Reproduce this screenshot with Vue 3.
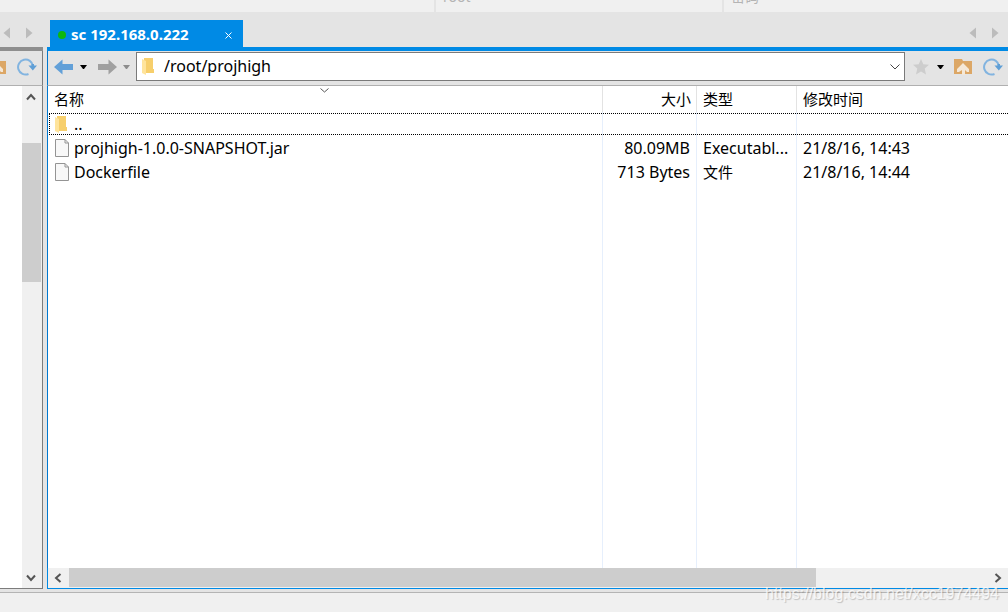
<script setup>
import { ref } from 'vue'

const path = ref('/root/projhigh')
const files = [
  { name: '..', icon: 'folder', size: '', type: '', date: '', focused: true },
  { name: 'projhigh-1.0.0-SNAPSHOT.jar', icon: 'file', size: '80.09MB', type: 'Executabl...', date: '21/8/16, 14:43' },
  { name: 'Dockerfile', icon: 'file', size: '713 Bytes', type: '文件', date: '21/8/16, 14:44', han: true },
]
</script>

<template>
  <div class="app">
    <header class="login">
      <div class="cell cell-host"></div>
      <div class="cell cell-user"><input type="text" placeholder="root" aria-label="用户名" /></div>
      <div class="cell cell-pass"><input type="text" placeholder="密码" aria-label="密码" /></div>
    </header>

    <main class="panes">
      <section class="pane local">
        <div class="tabs">
          <div class="arrows">
            <button aria-label="向左"><svg width="8" height="12"><path d="M7 0.5V11.5L0.5 6Z" fill="#bcbcbc" /></svg></button>
            <button aria-label="向右"><svg width="8" height="12"><path d="M1 0.5V11.5L7.5 6Z" fill="#bcbcbc" /></svg></button>
          </div>
        </div>
        <div class="bar"></div>
        <div class="tools">
          <button aria-label="上级目录">
            <svg width="18" height="16"><path d="M0 0H8L9 2H18V15H0Z" fill="#dca766" /><path d="M9 4L15 10V13H13L11 11V16H8V11L5 13H3V10Z" fill="#f4e8d8" /></svg>
          </button>
          <button aria-label="刷新">
            <svg width="20" height="18"><path d="M11.5 16A7.5 7.5 0 1 1 16 8" fill="none" stroke="#82b4e0" stroke-width="2" /><path d="M11.5 7.5H14.5V6H17V7.5H20L15.8 12.5Z" fill="#609fd6" /></svg>
          </button>
        </div>
        <div class="local-body">
          <div class="vscroll">
            <button aria-label="向上滚动"><svg width="10" height="8"><path d="M1 6.5L5 2L9 6.5" /></svg></button>
            <div class="vtrack"><div class="vthumb"></div></div>
            <button aria-label="向下滚动"><svg width="10" height="8"><path d="M1 1.5L5 6L9 1.5" /></svg></button>
          </div>
        </div>
      </section>

      <section class="pane remote">
        <div class="tabs">
          <div class="tab">
            <i class="dot"></i>
            <button class="tab-title">sc 192.168.0.222</button>
            <button class="close" aria-label="关闭"><svg width="7" height="7"><path d="M0.5 0.5L6.5 6.5M6.5 0.5L0.5 6.5" stroke="#fff" fill="none" /></svg></button>
          </div>
          <div class="arrows">
            <button aria-label="向左"><svg width="8" height="12"><path d="M7 0.5V11.5L0.5 6Z" fill="#bcbcbc" /></svg></button>
            <button aria-label="向右"><svg width="8" height="12"><path d="M1 0.5V11.5L7.5 6Z" fill="#bcbcbc" /></svg></button>
          </div>
        </div>
        <div class="bar"></div>
        <div class="tools">
          <button aria-label="后退"><svg width="20" height="16"><path d="M0 8L8.5 0.5V5H19V11H8.5V15.5Z" fill="#62a0d8" /></svg></button>
          <button class="drop" aria-label="后退历史"><svg width="7" height="4"><path d="M0 0H7L4 4H3Z" fill="#000" /></svg></button>
          <button aria-label="前进"><svg width="20" height="16"><path d="M20 8L11.5 0.5V5H1V11H11.5V15.5Z" fill="#a0a0a0" /></svg></button>
          <button class="drop drop-last" aria-label="前进历史"><svg width="7" height="4"><path d="M0 0H7L4 4H3Z" fill="#8c8c8c" /></svg></button>
          <div class="address">
            <svg width="12" height="17"><path d="M2 0H11V11H12V15H2Z" fill="#f7cf6c" /><path d="M0 1L4 3V17L0 15Z" fill="#ffe49c" /></svg>
            <input v-model="path" type="text" aria-label="路径" />
            <button aria-label="路径列表"><svg width="10" height="6"><path d="M0.5 0.5L5 5L9.5 0.5" fill="none" stroke="#444" /></svg></button>
          </div>
          <button class="star" aria-label="收藏"><svg width="16" height="16"><path d="M8 0L10.3 5.3L16 5.8L11.7 9.6L13 15.5L8 12.4L3 15.5L4.3 9.6L0 5.8L5.7 5.3Z" fill="#cdcdcd" /></svg></button>
          <button class="drop" aria-label="收藏列表"><svg width="7" height="4"><path d="M0 0H7L4 4H3Z" fill="#000" /></svg></button>
          <button aria-label="上级目录">
            <svg width="18" height="16"><path d="M0 0H8L9 2H18V15H0Z" fill="#dca766" /><path d="M9 4L15 10V13H13L11 11V16H8V11L5 13H3V10Z" fill="#f4e8d8" /></svg>
          </button>
          <button class="reload" aria-label="刷新">
            <svg width="20" height="18"><path d="M11.5 16A7.5 7.5 0 1 1 16 8" fill="none" stroke="#82b4e0" stroke-width="2" /><path d="M11.5 7.5H14.5V6H17V7.5H20L15.8 12.5Z" fill="#609fd6" /></svg>
          </button>
        </div>

        <div class="listing">
          <table>
            <colgroup><col /><col class="c-size" /><col class="c-type" /><col class="c-date" /></colgroup>
            <thead>
              <tr>
                <th>名称<svg class="sort" width="9" height="5"><path d="M0.5 0.5L4.5 4L8.5 0.5" fill="none" stroke="#555" /></svg></th>
                <th class="size">大小</th>
                <th>类型</th>
                <th>修改时间</th>
              </tr>
            </thead>
            <tbody>
              <tr v-for="f in files" :key="f.name" :class="{ focused: f.focused }">
                <td>
                  <div class="name">
                    <svg v-if="f.icon === 'folder'" width="14" height="17"><path d="M2 0H11V11H12V15H2Z" fill="#f7cf6c" /><path d="M0 1L4 3V17L0 15Z" fill="#ffe49c" /></svg>
                    <svg v-else width="14" height="18"><path d="M0.5 0.5H10L13.5 4V17.5H0.5Z" fill="#f8f8f8" stroke="#949494" /><path d="M10 0.5V4H13.5" fill="none" stroke="#949494" /></svg>
                    <span>{{ f.name }}</span>
                  </div>
                </td>
                <td class="size">{{ f.size }}</td>
                <td :class="{ han: f.han }">{{ f.type }}</td>
                <td>{{ f.date }}</td>
              </tr>
              <tr class="rest" aria-hidden="true"><td></td><td></td><td></td><td></td></tr>
            </tbody>
          </table>
        </div>
        <div class="hscroll">
          <button aria-label="向左滚动"><svg width="8" height="10"><path d="M6.5 1L2 5L6.5 9" /></svg></button>
          <div class="htrack"><div class="hthumb"></div></div>
          <button aria-label="向右滚动"><svg width="8" height="10"><path d="M1.5 1L6 5L1.5 9" /></svg></button>
        </div>
      </section>
    </main>

    <footer class="status"></footer>
    <div class="mark">https://blog.csdn.net/xcc1974494</div>
  </div>
</template>

<style>
body {
  margin: 0;
}
</style>

<style scoped>
.app {
  position: relative;
  display: flex;
  flex-direction: column;
  height: 100vh;
  overflow: hidden;
  background: #e4e4e4;
  color: #000;
  font: 15px/24px "Noto Sans", "Noto Sans CJK SC", sans-serif;
}
button {
  display: flex;
  flex: none;
  align-items: center;
  justify-content: center;
  margin: 0;
  padding: 0;
  border: 0;
  background: none;
  color: inherit;
  font: inherit;
}
svg {
  display: block;
  flex: none;
}
input {
  box-sizing: border-box;
  min-width: 0;
  padding: 0;
  border: 0;
  outline: 0;
  background: none;
  color: inherit;
  font: inherit;
}
.login {
  display: flex;
  flex: none;
  gap: 2px;
  height: 12px;
}
.cell {
  display: flex;
  align-items: flex-end;
  min-width: 0;
  overflow: hidden;
  background: #f0f0f0;
}
.cell input {
  width: 100%;
  height: 24px;
  margin: 0 7px 3px;
  font-size: 14px;
}
.cell input::placeholder {
  color: #b4b4b4;
  opacity: 1;
}
.cell-host { flex: 434; }
.cell-user { flex: 286; }
.cell-pass { flex: 284; }
.panes {
  display: flex;
  flex: 1;
  gap: 4px;
  min-height: 0;
}
.pane {
  display: flex;
  flex-direction: column;
  min-width: 0;
}
.local { width: 43px; flex: none; }
.remote { flex: 1; }
.tabs {
  display: flex;
  flex: none;
  align-items: flex-end;
  height: 35px;
}
.arrows {
  display: flex;
  gap: 14px;
  margin-bottom: 8px;
}
.local .arrows { margin-left: 3px; }
.remote .arrows { margin-left: auto; margin-right: 9px; }
.tab {
  display: flex;
  align-items: center;
  box-sizing: border-box;
  width: 193px;
  height: 27px;
  margin-left: 3px;
  padding: 0 11px 0 8px;
  background: #008ae5;
  color: #fff;
}
.dot {
  width: 8px;
  height: 8px;
  margin-top: 3px;
  border-radius: 50%;
  background: #0db80d;
}
.tab-title {
  margin-left: 5px;
  font-weight: 700;
}
.close { margin: 4px 0 0 auto; }
.bar {
  flex: none;
  height: 4px;
  background: #8e8e8e;
}
.remote .bar { background: #008ae5; }
.tools {
  display: flex;
  flex: none;
  align-items: center;
  box-sizing: border-box;
  height: 35px;
  padding-bottom: 3px;
  border-bottom: 1px solid #b0b0b0;
}
.local .tools {
  justify-content: flex-end;
  gap: 11px;
  padding-right: 5px;
  border-right: 1px solid #7c7c7c;
}
.remote .tools {
  padding: 0 5px 3px 6px;
  border-left: 1px solid #0078d0;
}
.drop {
  width: 19px;
  margin-right: 4px;
}
.drop-last { margin-right: 0; }
.address {
  display: flex;
  flex: 1;
  align-items: center;
  box-sizing: border-box;
  height: 29px;
  padding: 0 4px 0 5px;
  border: 1px solid #7a7a7a;
  background: #fff;
}
.address input {
  flex: 1;
  margin-left: 10px;
  padding-bottom: 2px;
  font-size: 16px;
}
.star { margin: 0 2px 0 8px; }
.reload { margin-left: 11px; }
.local-body {
  display: flex;
  flex: 1;
  justify-content: flex-end;
  border: solid #7c7c7c;
  border-width: 0 1px 1px 0;
  background: #fff;
}
.vscroll {
  display: flex;
  flex-direction: column;
  width: 20px;
  background: #f0f0f0;
}
.vscroll button {
  height: 21px;
  padding-right: 2px;
}
.vtrack {
  flex: 1;
  padding: 36px 1px 0 0;
}
.vthumb {
  height: 139px;
  background: #cdcdcd;
}
.vscroll path,
.hscroll path {
  fill: none;
  stroke: #555;
  stroke-width: 2;
}
.listing {
  flex: 1;
  min-height: 0;
  border-left: 1px solid #0078d0;
  background: #fff;
}
table {
  width: 100%;
  height: 100%;
  border-spacing: 0;
  table-layout: fixed;
}
.c-size { width: 94px; }
.c-type { width: 100px; }
.c-date { width: 211px; }
th,
td {
  box-sizing: border-box;
  height: 24px;
  padding: 0 6px;
  border-right: 1px solid #e6effc;
  text-align: left;
  font-weight: 400;
  white-space: nowrap;
}
td { font-size: 16px; }
td.han { font-size: 15px; }
th {
  position: relative;
  height: 26px;
  border-color: #e3e3e3;
}
th:last-child,
td:last-child { border-right: 0; }
th.size { text-align: right; padding-right: 5px; }
td.size { text-align: right; }
.sort {
  position: absolute;
  top: 2px;
  left: 50%;
  margin-left: -5px;
}
.name {
  display: flex;
  align-items: center;
  gap: 5px;
  padding-left: 1px;
}
.focused { position: relative; }
.focused .name::after {
  content: "";
  position: absolute;
  inset: 1px 0 1px 1px;
  border: 1px dotted #000;
  border-right: 0;
}
.rest td { height: auto; }
.hscroll {
  display: flex;
  flex: none;
  height: 20px;
  border: solid #008ae5;
  border-width: 0 0 1px 1px;
  background: #f0f0f0;
}
.hscroll button { width: 21px; }
.hscroll button:first-child {
  box-sizing: border-box;
  padding-right: 2px;
}
.htrack { flex: 1; }
.hthumb {
  width: 81.4%;
  height: 19px;
  background: #cdcdcd;
}
.status {
  flex: none;
  height: 19px;
  margin-top: 3px;
  border-top: 1px solid #b4b4b4;
  background: #f0f0f0;
}
.mark {
  position: absolute;
  right: 9px;
  bottom: 8px;
  color: rgba(255, 255, 255, 0.75);
  font: 16px/20px "Liberation Sans", sans-serif;
  text-shadow: 1px 1px 1px rgba(0, 0, 0, 0.2);
}
</style>
